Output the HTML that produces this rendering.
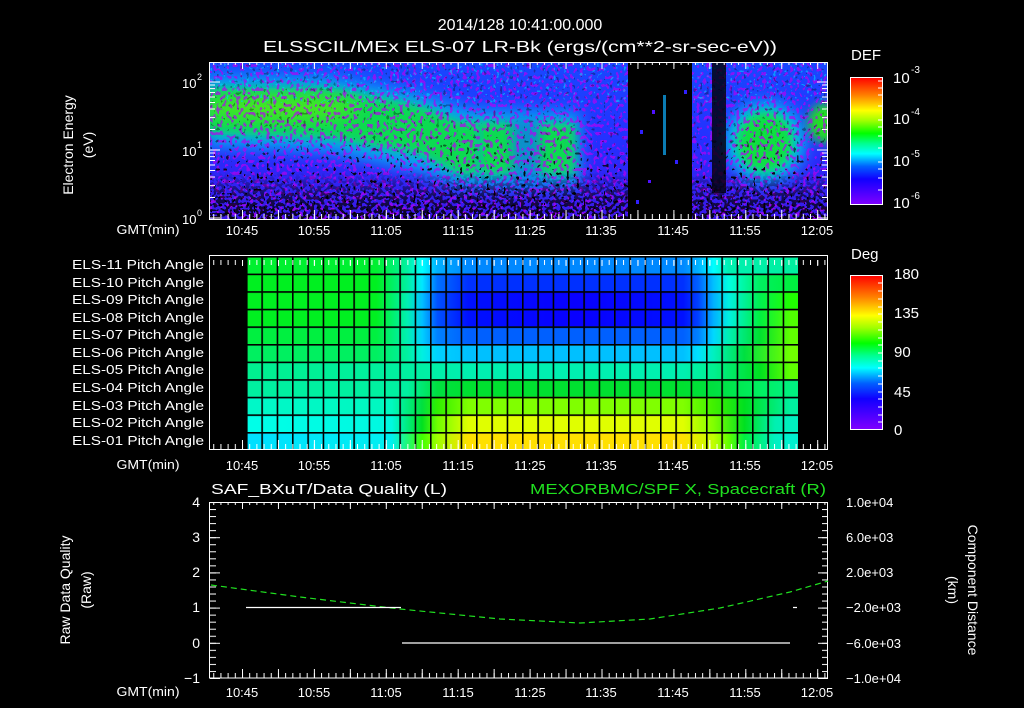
<!DOCTYPE html>
<html><head><meta charset="utf-8"><style>
html,body{margin:0;padding:0;background:#000;width:1024px;height:708px;overflow:hidden}
svg{display:block}
text{font-family:"Liberation Sans",sans-serif;fill:#fff}
</style></head><body>
<svg width="1024" height="708" viewBox="0 0 1024 708" xmlns="http://www.w3.org/2000/svg">
<defs>
<pattern id="mT" x="242" y="0" width="7.19" height="20" patternUnits="userSpaceOnUse"><line x1="0.5" y1="0" x2="0.5" y2="5" stroke="#fff" stroke-width="1"/></pattern>
<pattern id="MT" x="242" y="0" width="35.95" height="20" patternUnits="userSpaceOnUse"><line x1="0.5" y1="0" x2="0.5" y2="9" stroke="#fff" stroke-width="1"/></pattern>
<pattern id="mB" x="242" y="0" width="7.19" height="20" patternUnits="userSpaceOnUse"><line x1="0.5" y1="5" x2="0.5" y2="10" stroke="#fff" stroke-width="1"/></pattern>
<pattern id="MB" x="242" y="0" width="35.95" height="20" patternUnits="userSpaceOnUse"><line x1="0.5" y1="1" x2="0.5" y2="10" stroke="#fff" stroke-width="1"/></pattern>
<pattern id="yL" x="210" y="0" width="20" height="7.04" patternUnits="userSpaceOnUse"><line x1="0" y1="0.5" x2="6" y2="0.5" stroke="#fff"/></pattern>
<pattern id="yLM" x="210" y="0" width="20" height="35.2" patternUnits="userSpaceOnUse"><line x1="0" y1="0.5" x2="10" y2="0.5" stroke="#fff"/></pattern>
<pattern id="yR" x="808" y="0" width="20" height="7.04" patternUnits="userSpaceOnUse"><line x1="14" y1="0.5" x2="20" y2="0.5" stroke="#fff"/></pattern>
<pattern id="yRM" x="808" y="0" width="20" height="35.2" patternUnits="userSpaceOnUse"><line x1="10" y1="0.5" x2="20" y2="0.5" stroke="#fff"/></pattern>

<linearGradient id="cb" x1="0" y1="1" x2="0" y2="0">
<stop offset="0" stop-color="#8000ff"/><stop offset="0.2" stop-color="#1000ff"/><stop offset="0.3" stop-color="#0060ff"/><stop offset="0.4" stop-color="#00ffff"/><stop offset="0.48" stop-color="#00ff90"/><stop offset="0.56" stop-color="#00ff00"/><stop offset="0.66" stop-color="#a0ff00"/><stop offset="0.74" stop-color="#ffff00"/><stop offset="0.86" stop-color="#ff8000"/><stop offset="1" stop-color="#ff0000"/>
</linearGradient>

<linearGradient id="r0"><stop offset=".014" stop-color="#00f030"/><stop offset=".236" stop-color="#00f030"/><stop offset=".292" stop-color="#00f0a0"/><stop offset=".319" stop-color="#00ffff"/><stop offset=".347" stop-color="#00b0ff"/><stop offset=".403" stop-color="#0088ff"/><stop offset=".792" stop-color="#0088ff"/><stop offset=".819" stop-color="#00b0ff"/><stop offset=".847" stop-color="#00ffff"/><stop offset=".875" stop-color="#00f0b0"/><stop offset=".986" stop-color="#00f0a0"/></linearGradient>
<linearGradient id="r1"><stop offset=".014" stop-color="#00f020"/><stop offset=".236" stop-color="#00f020"/><stop offset=".292" stop-color="#00f0a0"/><stop offset=".319" stop-color="#00e8ff"/><stop offset=".347" stop-color="#0070ff"/><stop offset=".403" stop-color="#0030ff"/><stop offset=".792" stop-color="#0030ff"/><stop offset=".819" stop-color="#0060ff"/><stop offset=".847" stop-color="#00c0ff"/><stop offset=".875" stop-color="#00ffe0"/><stop offset=".931" stop-color="#00f060"/><stop offset=".986" stop-color="#00f040"/></linearGradient>
<linearGradient id="r2"><stop offset=".014" stop-color="#00f020"/><stop offset=".236" stop-color="#00f020"/><stop offset=".292" stop-color="#00f0b0"/><stop offset=".319" stop-color="#00c0ff"/><stop offset=".347" stop-color="#0050ff"/><stop offset=".403" stop-color="#0010ff"/><stop offset=".597" stop-color="#0800ff"/><stop offset=".792" stop-color="#0010ff"/><stop offset=".819" stop-color="#0040ff"/><stop offset=".847" stop-color="#00b0ff"/><stop offset=".875" stop-color="#00f0e0"/><stop offset=".931" stop-color="#00f050"/><stop offset=".986" stop-color="#20ff00"/></linearGradient>
<linearGradient id="r3"><stop offset=".014" stop-color="#00f020"/><stop offset=".236" stop-color="#00f020"/><stop offset=".292" stop-color="#00f0b0"/><stop offset=".319" stop-color="#00c0ff"/><stop offset=".347" stop-color="#0050ff"/><stop offset=".403" stop-color="#0010ff"/><stop offset=".597" stop-color="#0800ff"/><stop offset=".792" stop-color="#0010ff"/><stop offset=".819" stop-color="#0040ff"/><stop offset=".847" stop-color="#00b0ff"/><stop offset=".875" stop-color="#00f0e0"/><stop offset=".931" stop-color="#00f040"/><stop offset=".986" stop-color="#50ff00"/></linearGradient>
<linearGradient id="r4"><stop offset=".014" stop-color="#00f040"/><stop offset=".236" stop-color="#00f040"/><stop offset=".292" stop-color="#00f0b0"/><stop offset=".319" stop-color="#00d0ff"/><stop offset=".347" stop-color="#0080ff"/><stop offset=".403" stop-color="#0060ff"/><stop offset=".792" stop-color="#0060ff"/><stop offset=".819" stop-color="#0080ff"/><stop offset=".847" stop-color="#00d8ff"/><stop offset=".875" stop-color="#00f0b0"/><stop offset=".931" stop-color="#00e030"/><stop offset=".986" stop-color="#60ff00"/></linearGradient>
<linearGradient id="r5"><stop offset=".014" stop-color="#00f060"/><stop offset=".236" stop-color="#00f060"/><stop offset=".292" stop-color="#00f0a0"/><stop offset=".319" stop-color="#00f0e0"/><stop offset=".347" stop-color="#00d0ff"/><stop offset=".403" stop-color="#00c0ff"/><stop offset=".792" stop-color="#00c0ff"/><stop offset=".819" stop-color="#00e0ff"/><stop offset=".847" stop-color="#00f0c0"/><stop offset=".903" stop-color="#00e040"/><stop offset=".986" stop-color="#70ff00"/></linearGradient>
<linearGradient id="r6"><stop offset=".014" stop-color="#00f090"/><stop offset=".292" stop-color="#00f0a0"/><stop offset=".403" stop-color="#00f0b0"/><stop offset=".792" stop-color="#00f0b0"/><stop offset=".847" stop-color="#00f090"/><stop offset=".931" stop-color="#00e020"/><stop offset=".986" stop-color="#60ff00"/></linearGradient>
<linearGradient id="r7"><stop offset=".014" stop-color="#00f0a0"/><stop offset=".292" stop-color="#00f0a0"/><stop offset=".347" stop-color="#00e040"/><stop offset=".403" stop-color="#00e030"/><stop offset=".792" stop-color="#00e030"/><stop offset=".847" stop-color="#00e040"/><stop offset=".931" stop-color="#00f060"/><stop offset=".986" stop-color="#00f080"/></linearGradient>
<linearGradient id="r8"><stop offset=".014" stop-color="#00f8c8"/><stop offset=".264" stop-color="#00f8c0"/><stop offset=".319" stop-color="#00e040"/><stop offset=".347" stop-color="#30f000"/><stop offset=".403" stop-color="#80ff00"/><stop offset=".792" stop-color="#80ff00"/><stop offset=".847" stop-color="#40f000"/><stop offset=".903" stop-color="#00e020"/><stop offset=".986" stop-color="#00f0a0"/></linearGradient>
<linearGradient id="r9"><stop offset=".014" stop-color="#00ffe8"/><stop offset=".264" stop-color="#00f8e0"/><stop offset=".319" stop-color="#00e020"/><stop offset=".347" stop-color="#70ff00"/><stop offset=".403" stop-color="#e0ff00"/><stop offset=".792" stop-color="#e0ff00"/><stop offset=".847" stop-color="#80ff00"/><stop offset=".903" stop-color="#00e020"/><stop offset=".958" stop-color="#00f0b0"/><stop offset=".986" stop-color="#00f0c0"/></linearGradient>
<linearGradient id="r10"><stop offset=".014" stop-color="#00e0ff"/><stop offset=".264" stop-color="#00f0f0"/><stop offset=".319" stop-color="#40ff00"/><stop offset=".347" stop-color="#a0ff00"/><stop offset=".403" stop-color="#ffe000"/><stop offset=".792" stop-color="#ffe000"/><stop offset=".847" stop-color="#c0ff00"/><stop offset=".875" stop-color="#60ff00"/><stop offset=".903" stop-color="#00f040"/><stop offset=".958" stop-color="#00f0c0"/><stop offset=".986" stop-color="#00f0d0"/></linearGradient>

<pattern id="vg" x="246" y="0" width="15.333" height="10" patternUnits="userSpaceOnUse"><rect x="0" y="0" width="1.6" height="10" fill="#000"/></pattern>
<pattern id="hg" x="0" y="0" width="10" height="17.6" patternUnits="userSpaceOnUse"><rect x="0" y="0" width="10" height="1.6" fill="#000"/></pattern>

<clipPath id="spc"><rect x="210" y="63" width="617" height="156"/></clipPath>
<filter id="bl5" x="-30%" y="-30%" width="160%" height="160%"><feGaussianBlur stdDeviation="5"/></filter>
<filter id="bl8" x="-30%" y="-30%" width="160%" height="160%"><feGaussianBlur stdDeviation="8"/></filter>
<filter id="spk" x="0" y="0" width="100%" height="100%">
<feTurbulence type="fractalNoise" baseFrequency="0.3 0.25" numOctaves="1" seed="4"/>
<feColorMatrix type="matrix" values="0 0 0 0 0  0 0 0 0 0  0 0 0 0 0  1.5 0 0 0 -0.25"/>
<feComponentTransfer><feFuncA type="discrete" tableValues="0 0 0 0 0 0 1 1"/></feComponentTransfer>
</filter>
<filter id="spk2" x="0" y="0" width="100%" height="100%">
<feTurbulence type="fractalNoise" baseFrequency="0.28 0.3" numOctaves="1" seed="7"/>
<feColorMatrix type="matrix" values="0 0 0 0 0  0 0 0 0 0  0 0 0 0 0  1.5 0 0 0 -0.25"/>
<feComponentTransfer><feFuncA type="discrete" tableValues="0 0 0 0 1 1 1 1"/></feComponentTransfer>
</filter>
<filter id="spkP" x="0" y="0" width="100%" height="100%">
<feTurbulence type="fractalNoise" baseFrequency="0.3 0.25" numOctaves="1" seed="11"/>
<feColorMatrix type="matrix" values="0 0 0 0 0.45  0 0 0 0 0  0 0 0 0 0.9  1.5 0 0 0 -0.25"/>
<feComponentTransfer><feFuncA type="discrete" tableValues="0 0 0 0 0 0.7 0.7 0.7"/></feComponentTransfer>
</filter>
<filter id="spkC" x="0" y="0" width="100%" height="100%">
<feTurbulence type="fractalNoise" baseFrequency="0.3 0.3" numOctaves="1" seed="21"/>
<feColorMatrix type="matrix" values="0 0 0 0 0  0 0 0 0 0.6  0 0 0 0 1  1.5 0 0 0 -0.25"/>
<feComponentTransfer><feFuncA type="discrete" tableValues="0 0 0 0 0 0 0.6 0.6"/></feComponentTransfer>
</filter>
<linearGradient id="mg" x1="0" y1="0" x2="0" y2="1"><stop offset="0" stop-color="#fff" stop-opacity="0.3"/><stop offset="0.45" stop-color="#fff" stop-opacity="0.35"/><stop offset="0.7" stop-color="#fff" stop-opacity="0.9"/><stop offset="1" stop-color="#fff" stop-opacity="1"/></linearGradient>
<linearGradient id="mg2" x1="0" y1="0" x2="0" y2="1"><stop offset="0" stop-color="#fff" stop-opacity="0"/><stop offset="0.7" stop-color="#fff" stop-opacity="0"/><stop offset="0.85" stop-color="#fff" stop-opacity="0.6"/><stop offset="1" stop-color="#fff" stop-opacity="0.9"/></linearGradient>
<mask id="mk" maskUnits="userSpaceOnUse" x="0" y="0" width="1024" height="708"><rect x="210" y="63" width="617" height="156" fill="url(#mg)"/></mask>
<mask id="mk2" maskUnits="userSpaceOnUse" x="0" y="0" width="1024" height="708"><rect x="210" y="63" width="617" height="156" fill="url(#mg2)"/></mask>
<linearGradient id="bgv" x1="0" y1="0" x2="0" y2="1"><stop offset="0" stop-color="#1848ff"/><stop offset="0.5" stop-color="#2430ff"/><stop offset="1" stop-color="#3a18e8"/></linearGradient>
</defs>

<!-- Titles -->
<text x="520" y="30" font-size="16" text-anchor="middle">2014/128 10:41:00.000</text>
<text x="520" y="52" font-size="16" text-anchor="middle" textLength="514" lengthAdjust="spacingAndGlyphs">ELSSCIL/MEx ELS-07 LR-Bk  (ergs/(cm**2-sr-sec-eV))</text>

<!-- TOP PANEL spectrogram -->
<g clip-path="url(#spc)">
<rect x="210" y="63" width="617" height="156" fill="url(#bgv)"/>
<polygon points="205,76 330,78 420,94 470,110 580,112 580,186 460,186 420,172 330,152 205,146" fill="#00c8f0" filter="url(#bl8)" opacity="0.8"/>
<polygon points="205,88 330,88 420,106 460,122 575,124 575,174 460,174 420,154 330,138 205,133" fill="#10e040" filter="url(#bl5)" opacity="0.9"/>
<ellipse cx="280" cy="108" rx="80" ry="12" fill="#70f000" filter="url(#bl8)" opacity="0.6"/>
<rect x="512" y="118" width="28" height="66" fill="#1070ff" filter="url(#bl5)" opacity="0.7"/>
<rect x="476" y="125" width="6" height="55" fill="#10a0ff" filter="url(#bl5)" opacity="0.6"/>
<ellipse cx="765" cy="142" rx="40" ry="40" fill="#00c8f0" filter="url(#bl8)"/>
<ellipse cx="765" cy="142" rx="28" ry="30" fill="#10e040" filter="url(#bl5)"/>
<ellipse cx="826" cy="123" rx="18" ry="20" fill="#20e020" filter="url(#bl5)"/>
<rect x="210" y="63" width="617" height="156" fill="#000" filter="url(#spkP)"/>
<rect x="210" y="63" width="617" height="40" fill="#000" filter="url(#spkC)"/>
<g mask="url(#mk)"><rect x="210" y="63" width="617" height="156" fill="#000" filter="url(#spk)"/></g>
<g mask="url(#mk2)"><rect x="210" y="63" width="617" height="156" fill="#000" filter="url(#spk2)"/></g>
<rect x="628" y="63" width="64" height="156" fill="#000"/>
<rect x="663" y="95" width="3" height="60" fill="#10b0ff" opacity="0.7"/>
<rect x="640" y="130" width="3" height="4" fill="#3020ff"/><rect x="652" y="110" width="3" height="4" fill="#5010ff"/><rect x="675" y="160" width="3" height="4" fill="#3020ff"/><rect x="648" y="180" width="3" height="3" fill="#5010ff"/><rect x="684" y="90" width="3" height="4" fill="#3020ff"/><rect x="636" y="200" width="3" height="4" fill="#3020ff"/>
<rect x="712" y="63" width="14" height="130" fill="#000" opacity="0.8"/>
</g>
<rect x="209.5" y="62.5" width="618" height="157" fill="none" stroke="#fff"/>
<rect x="210" y="63" width="617" height="10" fill="url(#mT)"/>
<rect x="210" y="63" width="617" height="10" fill="url(#MT)"/>
<g transform="translate(0,209)"><rect x="210" y="0" width="617" height="10" fill="url(#mB)"/><rect x="210" y="0" width="617" height="10" fill="url(#MB)"/></g>
<g stroke="#fff">
<path d="M210 82h10M210 150h10M210 218h10M827 82h-10M827 150h-10M827 218h-10
M210 197.5h5M210 185.6h5M210 177h5M210 170.5h5M210 165h5M210 160.5h5M210 156.6h5M210 153h5
M210 129.5h5M210 117.6h5M210 109h5M210 102.5h5M210 97h5M210 92.5h5M210 88.6h5M210 85h5
M827 197.5h-5M827 185.6h-5M827 177h-5M827 170.5h-5M827 165h-5M827 160.5h-5M827 156.6h-5M827 153h-5
M827 129.5h-5M827 117.6h-5M827 109h-5M827 102.5h-5M827 97h-5M827 92.5h-5M827 88.6h-5M827 85h-5"/>
</g>
<text x="182" y="88" font-size="13">10</text><text x="197" y="80" font-size="9">2</text>
<text x="182" y="156" font-size="13">10</text><text x="197" y="148" font-size="9">1</text>
<text x="182" y="224" font-size="13">10</text><text x="197" y="216" font-size="9">0</text>
<text transform="translate(73,145) rotate(-90)" font-size="14" text-anchor="middle">Electron Energy</text>
<text transform="translate(93,145) rotate(-90)" font-size="14" text-anchor="middle">(eV)</text>
<g font-size="13" text-anchor="middle">
<text x="148" y="234" textLength="63" lengthAdjust="spacingAndGlyphs">GMT(min)</text>
<text x="242" y="235">10:45</text><text x="314" y="235">10:55</text><text x="386" y="235">11:05</text><text x="458" y="235">11:15</text><text x="530" y="235">11:25</text><text x="601" y="235">11:35</text><text x="673" y="235">11:45</text><text x="745" y="235">11:55</text><text x="817" y="235">12:05</text>
</g>

<!-- DEF colorbar -->
<text x="851" y="60" font-size="15">DEF</text>
<rect x="850.5" y="77.5" width="32" height="127" fill="url(#cb)" stroke="#fff"/>
<g stroke="#fff"><path d="M882 81h-4M882 88h-4M882 95h-4M882 106h-4M882 120h-4M882 127h-4M882 136h-4M882 148h-4M882 162h-4M882 169h-4M882 178h-4M882 190h-4"/></g>
<text x="893" y="83" font-size="15">10</text><text x="911" y="73" font-size="10">-3</text>
<text x="893" y="124" font-size="15">10</text><text x="911" y="115" font-size="10">-4</text>
<text x="893" y="166" font-size="15">10</text><text x="911" y="157" font-size="10">-5</text>
<text x="893" y="208" font-size="15">10</text><text x="911" y="199" font-size="10">-6</text>

<!-- MIDDLE PANEL -->
<g>
<rect x="246" y="256" width="552" height="17.6" fill="url(#r0)"/>
<rect x="246" y="273.6" width="552" height="17.6" fill="url(#r1)"/>
<rect x="246" y="291.2" width="552" height="17.6" fill="url(#r2)"/>
<rect x="246" y="308.8" width="552" height="17.6" fill="url(#r3)"/>
<rect x="246" y="326.4" width="552" height="17.6" fill="url(#r4)"/>
<rect x="246" y="344" width="552" height="17.6" fill="url(#r5)"/>
<rect x="246" y="361.6" width="552" height="17.6" fill="url(#r6)"/>
<rect x="246" y="379.2" width="552" height="17.6" fill="url(#r7)"/>
<rect x="246" y="396.8" width="552" height="17.6" fill="url(#r8)"/>
<rect x="246" y="414.4" width="552" height="17.6" fill="url(#r9)"/>
<rect x="246" y="432" width="552" height="17.6" fill="url(#r10)"/>
<rect x="246" y="256" width="553" height="194" fill="url(#vg)"/>
<g transform="translate(0,256)"><rect x="246" y="0" width="552" height="194" fill="url(#hg)"/></g>
</g>
<rect x="209.5" y="255.5" width="618" height="194" fill="none" stroke="#fff"/>
<rect x="210" y="256" width="617" height="10" fill="url(#mT)"/>
<rect x="210" y="256" width="617" height="10" fill="url(#MT)"/>
<g transform="translate(0,439)"><rect x="210" y="0" width="617" height="10" fill="url(#mB)"/><rect x="210" y="0" width="617" height="10" fill="url(#MB)"/></g>
<g font-size="12.5" text-anchor="end">
<text x="204" y="269" textLength="132" lengthAdjust="spacingAndGlyphs">ELS-11 Pitch Angle</text>
<text x="204" y="287" textLength="132" lengthAdjust="spacingAndGlyphs">ELS-10 Pitch Angle</text>
<text x="204" y="304" textLength="132" lengthAdjust="spacingAndGlyphs">ELS-09 Pitch Angle</text>
<text x="204" y="322" textLength="132" lengthAdjust="spacingAndGlyphs">ELS-08 Pitch Angle</text>
<text x="204" y="339" textLength="132" lengthAdjust="spacingAndGlyphs">ELS-07 Pitch Angle</text>
<text x="204" y="357" textLength="132" lengthAdjust="spacingAndGlyphs">ELS-06 Pitch Angle</text>
<text x="204" y="374" textLength="132" lengthAdjust="spacingAndGlyphs">ELS-05 Pitch Angle</text>
<text x="204" y="392" textLength="132" lengthAdjust="spacingAndGlyphs">ELS-04 Pitch Angle</text>
<text x="204" y="410" textLength="132" lengthAdjust="spacingAndGlyphs">ELS-03 Pitch Angle</text>
<text x="204" y="427" textLength="132" lengthAdjust="spacingAndGlyphs">ELS-02 Pitch Angle</text>
<text x="204" y="445" textLength="132" lengthAdjust="spacingAndGlyphs">ELS-01 Pitch Angle</text>
</g>
<g font-size="13" text-anchor="middle">
<text x="148" y="469" textLength="63" lengthAdjust="spacingAndGlyphs">GMT(min)</text>
<text x="242" y="470">10:45</text><text x="314" y="470">10:55</text><text x="386" y="470">11:05</text><text x="458" y="470">11:15</text><text x="530" y="470">11:25</text><text x="601" y="470">11:35</text><text x="673" y="470">11:45</text><text x="745" y="470">11:55</text><text x="817" y="470">12:05</text>
</g>

<!-- Deg colorbar -->
<text x="851" y="259" font-size="15">Deg</text>
<rect x="850.5" y="275.5" width="32" height="154" fill="url(#cb)" stroke="#fff"/>
<g stroke="#fff"><path d="M882 283h-4M882 291h-4M882 299h-4M882 307h-4M882 314h-4M882 322h-4M882 330h-4M882 338h-4M882 345h-4M882 353h-4M882 361h-4M882 368h-4M882 376h-4M882 384h-4M882 392h-4M882 399h-4M882 407h-4M882 415h-4M882 422h-4"/></g>
<g font-size="15"><text x="894" y="279">180</text><text x="894" y="318">135</text><text x="894" y="357">90</text><text x="894" y="397">45</text><text x="894" y="435">0</text></g>

<!-- BOTTOM PANEL -->
<text x="211" y="494" font-size="15" textLength="236" lengthAdjust="spacingAndGlyphs">SAF_BXuT/Data Quality (L)</text>
<text x="826" y="494" font-size="15" text-anchor="end" style="fill:#20e020" textLength="296" lengthAdjust="spacingAndGlyphs">MEXORBMC/SPF X, Spacecraft (R)</text>
<rect x="209.5" y="502.5" width="618" height="175.5" fill="none" stroke="#fff"/>
<rect x="210" y="503" width="617" height="10" fill="url(#mT)"/>
<rect x="210" y="503" width="617" height="10" fill="url(#MT)"/>
<g transform="translate(0,668)"><rect x="210" y="0" width="617" height="10" fill="url(#mB)"/><rect x="210" y="0" width="617" height="10" fill="url(#MB)"/></g>
<g transform="translate(0,502)">
<rect x="210" y="0" width="20" height="177" fill="url(#yL)"/>
<rect x="210" y="0" width="20" height="177" fill="url(#yLM)"/>
<rect x="808" y="0" width="20" height="177" fill="url(#yR)"/>
<rect x="808" y="0" width="20" height="177" fill="url(#yRM)"/>
</g>
<polyline points="211,585 300,597 400,609 500,619 580,623 650,619 720,608 790,592 828,581" fill="none" stroke="#20e020" stroke-width="1.2" stroke-dasharray="6,4"/>
<g stroke="#fff" stroke-width="1.2">
<path d="M246 607.5H401M402 643H790M793 607.5h4"/>
</g>
<g font-size="14" text-anchor="end">
<text x="200" y="507">4</text><text x="200" y="542">3</text><text x="200" y="577">2</text><text x="200" y="612">1</text><text x="200" y="648">0</text><text x="200" y="683">−1</text>
</g>
<g font-size="13">
<text x="846" y="507">1.0e+04</text><text x="846" y="542">6.0e+03</text><text x="846" y="577">2.0e+03</text><text x="846" y="612">−2.0e+03</text><text x="846" y="648">−6.0e+03</text><text x="846" y="683">−1.0e+04</text>
</g>
<text transform="translate(70,590) rotate(-90)" font-size="14" text-anchor="middle">Raw Data Quality</text>
<text transform="translate(91,590) rotate(-90)" font-size="14" text-anchor="middle">(Raw)</text>
<text transform="translate(968,590) rotate(90)" font-size="14" text-anchor="middle">Component Distance</text>
<text transform="translate(948,590) rotate(90)" font-size="14" text-anchor="middle">(km)</text>
<g font-size="13" text-anchor="middle">
<text x="148" y="696" textLength="63" lengthAdjust="spacingAndGlyphs">GMT(min)</text>
<text x="242" y="697">10:45</text><text x="314" y="697">10:55</text><text x="386" y="697">11:05</text><text x="458" y="697">11:15</text><text x="530" y="697">11:25</text><text x="601" y="697">11:35</text><text x="673" y="697">11:45</text><text x="745" y="697">11:55</text><text x="817" y="697">12:05</text>
</g>
</svg>
</body></html>
